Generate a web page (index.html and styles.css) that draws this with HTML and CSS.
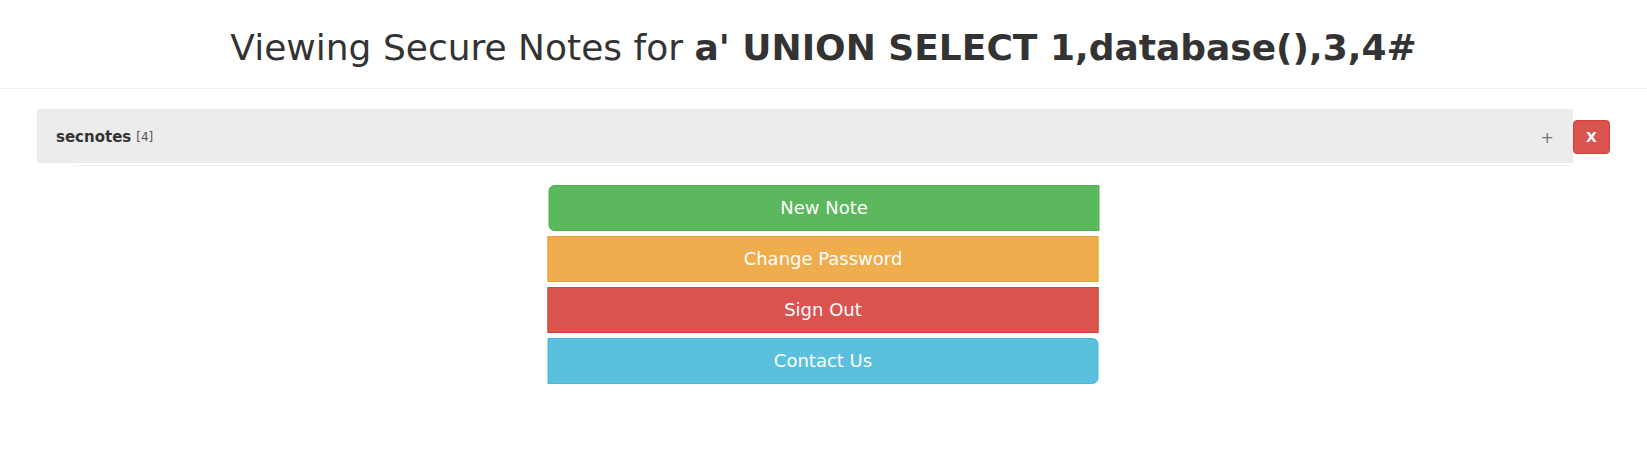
FILE: index.html
```html
<!DOCTYPE html>
<html>
<head>
<meta charset="utf-8">
<link rel="stylesheet" href="styles.css">
</head>
<body>
<header class="page-header">
  <h1 class="title">Viewing Secure Notes for <strong>a' UNION SELECT 1,database(),3,4#</strong></h1>
</header>
<section class="notes">
  <div class="note-row">
    <div class="note-bar">
      <span class="note-name">secnotes</span>
      <span class="note-count">[4]</span>
      <span class="note-plus">+</span>
    </div>
    <button class="note-del">X</button>
  </div>
  <div class="note-under"></div>
</section>
<nav class="actions">
  <a class="btn btn-green">New Note</a>
  <a class="btn btn-orange">Change Password</a>
  <a class="btn btn-red">Sign Out</a>
  <a class="btn btn-blue">Contact Us</a>
</nav>
</body>
</html>
```
FILE: styles.css
```css
html, body {
  margin: 0;
  padding: 0;
  background: #fff;
  font-family: "DejaVu Sans", sans-serif;
  color: #333;
}
.page-header {
  height: 88px;
  border-bottom: 1px solid #eee;
  display: flex;
  align-items: flex-start;
  justify-content: center;
}
.title {
  margin: 28px 0 0;
  font-size: 36px;
  font-weight: normal;
  line-height: 40px;
  white-space: nowrap;
}
.title strong {
  font-weight: bold;
}
.notes {
  margin: 20px 0 0 37px;
  width: 1573px;
}
.note-row {
  display: flex;
  align-items: flex-start;
}
.note-bar {
  width: 1536px;
  height: 54px;
  background: #ececec;
  display: flex;
  align-items: center;
  padding: 2px 0 0 19px;
  box-sizing: border-box;
  font-size: 15px;
}
.note-name {
  font-weight: bold;
  color: #333;
}
.note-count {
  font-size: 12px;
  color: #555;
  margin-left: 5px;
}
.note-plus {
  margin-left: auto;
  margin-right: 19px;
  color: #777;
  font-size: 16px;
}
.note-del {
  margin-top: 11px;
  width: 37px;
  height: 34px;
  background: #d9534f;
  border: 1px solid #d43f3a;
  border-radius: 4px;
  color: #fff;
  font-family: "DejaVu Sans", sans-serif;
  font-weight: bold;
  font-size: 14px;
  padding: 0;
}
.note-under {
  margin: 2px 0 0 37px;
  width: 1499px;
  border-top: 1px solid #f2f2f2;
}
.actions {
  width: 551px;
  margin: 19px auto 0;
  display: flex;
  flex-direction: column;
  gap: 5px;
  transform: translateX(-0.5px);
}
.btn {
  display: flex;
  align-items: center;
  justify-content: center;
  height: 46px;
  box-sizing: border-box;
  border: 1px solid;
  color: #fff;
  font-size: 18px;
  padding-bottom: 1px;
}
.btn-green {
  background: #5cb85c;
  border-color: #4cae4c;
  border-radius: 6px 0 0 6px;
  margin-left: 1px;
  margin-right: -1px;
}
.btn-orange {
  background: #f0ad4e;
  border-color: #eea236;
}
.btn-red {
  background: #d9534f;
  border-color: #d43f3a;
}
.btn-blue {
  background: #5bc0de;
  border-color: #46b8da;
  border-radius: 0 6px 6px 0;
}
```
